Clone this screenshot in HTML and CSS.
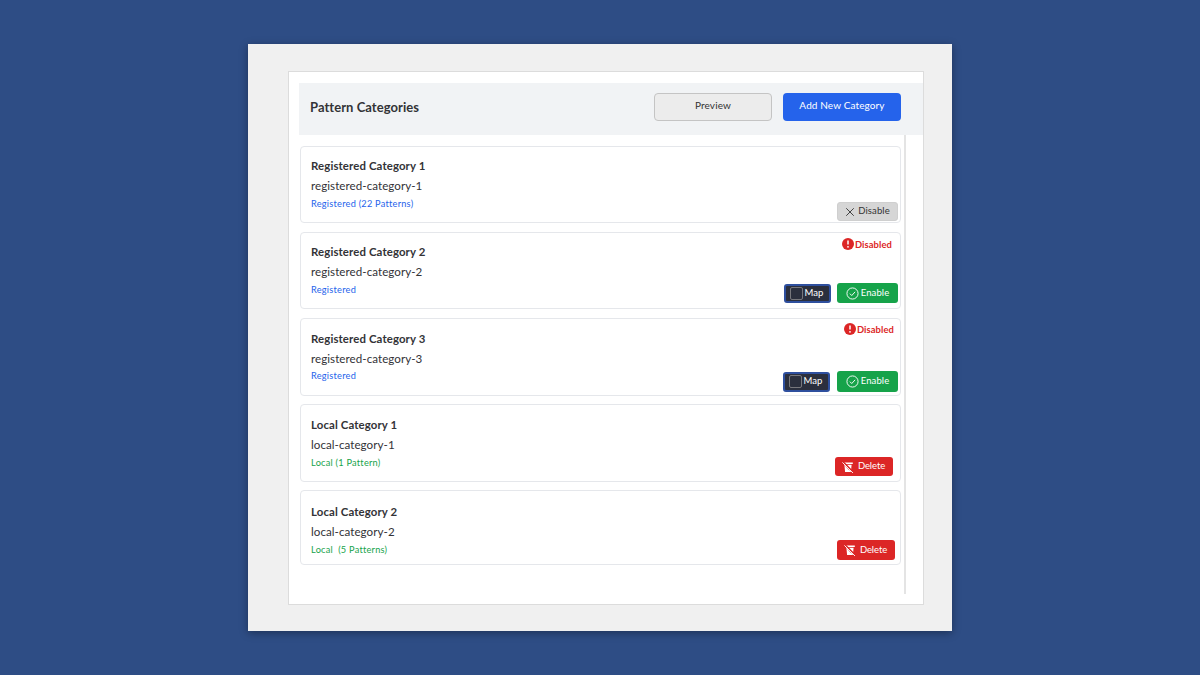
FILE: index.html
```html
<!DOCTYPE html>
<html lang="en">
<head>
<meta charset="utf-8">
<title>Pattern Categories</title>
<link rel="stylesheet" href="styles.css">
</head>
<body>
<main class="panel">
  <section class="sheet">
    <header class="head">
      <h1 class="head-title">Pattern Categories</h1>
      <button class="btn-preview">Preview</button>
      <button class="btn-add">Add New Category</button>
    </header>
    <div class="list">
      <article class="card card-a">
        <div class="info">
          <h2 class="name">Registered Category 1</h2>
          <p class="slug">registered-category-1</p>
          <p class="meta reg">Registered (22 Patterns)</p>
        </div>
        <div class="side">
          <div class="btns">
            <button class="act act-disable"><svg class="ic" viewBox="0 0 12 12"><path d="M1.5 1.5l9 9M10.5 1.5l-9 9" fill="none" stroke="#333" stroke-width="1.1"/></svg>Disable</button>
          </div>
        </div>
      </article>
      <article class="card card-b">
        <div class="info">
          <h2 class="name">Registered Category 2</h2>
          <p class="slug">registered-category-2</p>
          <p class="meta reg">Registered</p>
        </div>
        <div class="side">
          <div class="status"><svg class="ic-alert" viewBox="0 0 12 12"><circle cx="6" cy="6" r="6" fill="#dc2626"/><path d="M6 2.6v4" stroke="#fff" stroke-width="1.5"/><circle cx="6" cy="8.8" r=".9" fill="#fff"/></svg>Disabled</div>
          <div class="btns">
            <button class="act act-map"><span class="check"></span>Map</button>
            <button class="act act-enable"><svg class="ic-ok" viewBox="0 0 14 14"><circle cx="7" cy="7" r="6" fill="none" stroke="#fff" stroke-width="1"/><path d="M4.2 7.2l2 2 3.6-4" fill="none" stroke="#fff" stroke-width="1"/></svg>Enable</button>
          </div>
        </div>
      </article>
      <article class="card card-c">
        <div class="info">
          <h2 class="name">Registered Category 3</h2>
          <p class="slug">registered-category-3</p>
          <p class="meta reg">Registered</p>
        </div>
        <div class="side">
          <div class="status"><svg class="ic-alert" viewBox="0 0 12 12"><circle cx="6" cy="6" r="6" fill="#dc2626"/><path d="M6 2.6v4" stroke="#fff" stroke-width="1.5"/><circle cx="6" cy="8.8" r=".9" fill="#fff"/></svg>Disabled</div>
          <div class="btns">
            <button class="act act-map"><span class="check"></span>Map</button>
            <button class="act act-enable"><svg class="ic-ok" viewBox="0 0 14 14"><circle cx="7" cy="7" r="6" fill="none" stroke="#fff" stroke-width="1"/><path d="M4.2 7.2l2 2 3.6-4" fill="none" stroke="#fff" stroke-width="1"/></svg>Enable</button>
          </div>
        </div>
      </article>
      <article class="card card-d">
        <div class="info">
          <h2 class="name">Local Category 1</h2>
          <p class="slug">local-category-1</p>
          <p class="meta loc">Local (1 Pattern)</p>
        </div>
        <div class="side">
          <div class="btns">
            <button class="act act-delete"><svg class="ic-del" viewBox="0 0 12 12"><path d="M1.2 1.6h9.6v1.3H1.2zM2.4 3.7h7.2l-.7 7.4H3.1z" fill="#fff"/><path d="M4 5.2l3.6 4" stroke="#dc2626" stroke-width=".8"/><path d="M.6 .6l10.8 11" stroke="#dc2626" stroke-width="1.9"/><path d="M.4 1.4l10.6 10.6" stroke="#fff" stroke-width=".9"/></svg>Delete</button>
          </div>
        </div>
      </article>
      <article class="card card-e">
        <div class="info">
          <h2 class="name">Local Category 2</h2>
          <p class="slug">local-category-2</p>
          <p class="meta loc">Local&nbsp; (5 Patterns)</p>
        </div>
        <div class="side">
          <div class="btns">
            <button class="act act-delete"><svg class="ic-del" viewBox="0 0 12 12"><path d="M1.2 1.6h9.6v1.3H1.2zM2.4 3.7h7.2l-.7 7.4H3.1z" fill="#fff"/><path d="M4 5.2l3.6 4" stroke="#dc2626" stroke-width=".8"/><path d="M.6 .6l10.8 11" stroke="#dc2626" stroke-width="1.9"/><path d="M.4 1.4l10.6 10.6" stroke="#fff" stroke-width=".9"/></svg>Delete</button>
          </div>
        </div>
      </article>
    </div>
  </section>
</main>
</body>
</html>
```
FILE: styles.css
```css
* { box-sizing: border-box; }
html, body { height: 100%; }
body {
  margin: 0;
  background: #2e4d85;
  font-family: Lato, "Open Sans", sans-serif;
  color: #333337;
  overflow: hidden;
  padding-top: 44px;
}
h1, h2, p { margin: 0; font-weight: inherit; }
button { font-family: inherit; cursor: pointer; }

.panel {
  width: 704px;
  height: 587px;
  margin-left: 248px;
  padding: 27px 28px 26px 40px;
  background: #f0f0f0;
  box-shadow: 0 2px 8px rgba(0, 0, 0, .35);
}
.sheet {
  height: 534px;
  background: #fff;
  border: 1px solid #dcdcdc;
  padding: 11px 0 0 10px;
}
.head {
  display: flex;
  align-items: center;
  height: 52px;
  background: #f1f3f5;
  padding: 0 22px 5px 11px;
}
.head-title {
  font-size: 13px;
  font-weight: 700;
  letter-spacing: .05px;
  margin-right: auto;
}
.btn-preview {
  width: 118px;
  height: 28px;
  margin-right: 11px;
  padding: 0 0 3px;
  background: #ececec;
  border: 1px solid #c4c4c4;
  border-radius: 4px;
  color: #333;
  font-size: 10px;
  letter-spacing: .15px;
}
.btn-add {
  width: 118px;
  height: 28px;
  padding: 0 0 3px;
  background: #2563eb;
  border: 0;
  border-radius: 4px;
  color: #fff;
  font-size: 10px;
  letter-spacing: .12px;
}

.list {
  width: 607px;
  height: 459px;
  border-right: 2px solid #e4e4e4;
  padding: 11px 3px 0 1px;
}
.card {
  display: flex;
  justify-content: space-between;
  height: 78px;
  margin-bottom: 8px;
  background: #fff;
  border: 1px solid #e5e7eb;
  border-radius: 4px;
  padding: 0 2px 2px 10px;
}
.card-a { height: 77px; margin-bottom: 9px; padding-bottom: 1px; }
.card-b { height: 77px; margin-bottom: 9px; }
.card-e { height: 75px; margin: 0; }

.info { padding-top: 13px; }
.card-a .info { padding-top: 12px; }
.card-b .info { padding-top: 12px; }
.card-e .info { padding-top: 14px; }
.name { font-size: 11.4px; font-weight: 700; line-height: 14px; letter-spacing: .12px; }
.slug { font-size: 11.6px; line-height: 14px; margin-top: 6px; letter-spacing: .05px; }
.meta { font-size: 9.2px; line-height: 12px; margin-top: 5px; letter-spacing: .25px; }
.card-c .meta { margin-top: 4px; }
.reg { color: #2563eb; }
.loc { color: #16a34a; }

.side {
  display: flex;
  flex-direction: column;
  justify-content: space-between;
  align-items: flex-end;
}
.btns { display: flex; gap: 6px; margin-top: auto; align-items: center; }
.status {
  display: flex;
  align-items: center;
  gap: 1px;
  margin: 5px 6px 0 0;
  color: #dc2626;
  font-size: 9.4px;
  font-weight: 700;
  letter-spacing: .1px;
}
.card-c .status { margin: 4px 4px 0 0; }
.ic-alert { width: 12px; height: 12px; }

.act {
  display: flex;
  align-items: center;
  justify-content: center;
  height: 20px;
  border: 0;
  border-radius: 3px;
  padding: 0 0 2px;
  font-size: 9.5px;
  letter-spacing: .1px;
  color: #fff;
}
.act-disable { width: 61px; height: 19px; background: #d6d6d6; color: #333; gap: 3px; border: 1px solid #cfcfcf; padding: 0 0 2px; }
.ic { width: 10px; height: 10px; margin-top: 2px; }
.act-map {
  width: 47px;
  height: 19px;
  background: #2b2f3d;
  border: 2px solid #2e4f9e;
  gap: 1px;
  padding: 0 1px 1px 0;
}
.check {
  width: 13px;
  height: 13px;
  margin-top: 1px;
  border: 1px solid #77777c;
  border-radius: 2px;
}
.act-enable { width: 61px; height: 20px; background: #16a34a; gap: 2px; }
.ic-ok { width: 13px; height: 13px; margin-top: 2px; }
.act-delete { width: 58px; height: 19px; background: #dc2626; gap: 4px; letter-spacing: -.1px; padding: 0 1px 2px 0; }
.ic-del { width: 12px; height: 12px; margin-top: 2px; }

.card-b .btns { margin-bottom: 3px; }
.card-c .btns { margin-bottom: 1px; gap: 7px; }
.card-c .act-map { height: 20px; padding-bottom: 2px; }
.card-c .act-enable { height: 21px; }
.card-d { padding-right: 7px; }
.card-d .btns { margin-bottom: 3px; }
.card-e { padding-right: 5px; }
.card-e .btns { margin-bottom: 2px; }
.card-e .act-delete { height: 20px; }
```
